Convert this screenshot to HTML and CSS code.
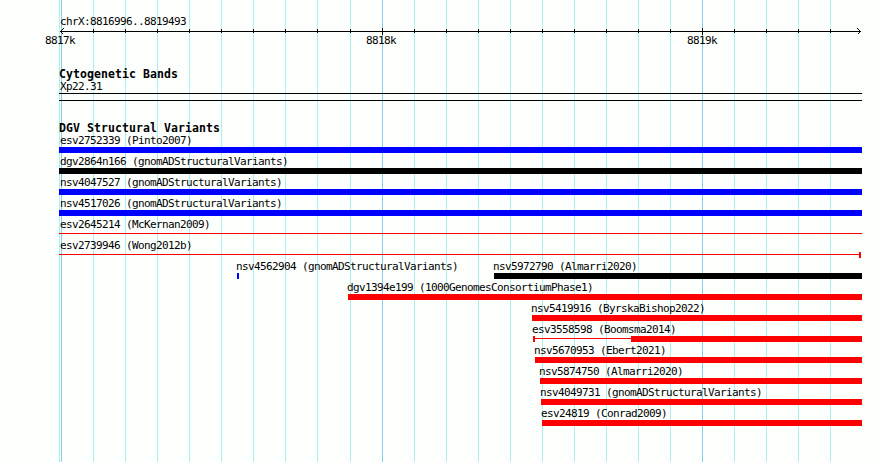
FILE: index.html
```html
<!DOCTYPE html>
<html lang="en">
<head>
    <meta charset="UTF-8">
    <title>chrX:8816996..8819493</title>
    <link rel="stylesheet" href="styles.css">
</head>
<body>
    <div class="browser">
        <svg class="grid" width="890" height="462" shape-rendering="crispEdges">
            <path class="minor" d="M59.5 0V462M93.5 0V462M125.5 0V462M157.5 0V462M189.5 0V462M221.5 0V462M253.5 0V462M285.5 0V462M317.5 0V462M350.5 0V462M414.5 0V462M446.5 0V462M478.5 0V462M510.5 0V462M542.5 0V462M574.5 0V462M606.5 0V462M638.5 0V462M670.5 0V462M734.5 0V462M766.5 0V462M798.5 0V462M830.5 0V462"/>
            <path class="major" d="M61.5 0V462M382.5 0V462M702.5 0V462"/>
        </svg>

        <main class="tracks">
            <header class="ruler">
                <div class="label">chrX:8816996..8819493</div>
                <svg class="scale" width="803" height="8" shape-rendering="crispEdges">
                    <path d="M1 3.5H802M34.5 1V5M66.5 1V5M98.5 1V5M130.5 1V5M162.5 1V5M194.5 1V5M226.5 1V5M258.5 1V5M291.5 1V5M355.5 1V5M387.5 1V5M419.5 1V5M451.5 1V5M483.5 1V5M515.5 1V5M547.5 1V5M579.5 1V5M611.5 1V5M675.5 1V5M707.5 1V5M739.5 1V5M771.5 1V5M323.5 0V7M643.5 0V7"/>
                    <path d="M4.5 0.5L1.5 3.5L4.5 6.5M798.5 0.5L801.5 3.5L798.5 6.5"/>
                </svg>
                <div class="ticks">
                    <span>8817k</span>
                    <span>8818k</span>
                    <span>8819k</span>
                </div>
            </header>

            <section class="cytobands">
                <h2>Cytogenetic Bands</h2>
                <div class="label">Xp22.31</div>
                <div class="band"></div>
            </section>

            <section class="variants">
                <h2>DGV Structural Variants</h2>
                <div class="row"><div class="feature wide blue"><span class="label">esv2752339 (Pinto2007)</span><i class="bar"></i></div></div>
                <div class="row"><div class="feature wide black"><span class="label">dgv2864n166 (gnomADStructuralVariants)</span><i class="bar"></i></div></div>
                <div class="row"><div class="feature wide blue"><span class="label">nsv4047527 (gnomADStructuralVariants)</span><i class="bar"></i></div></div>
                <div class="row"><div class="feature wide blue"><span class="label">nsv4517026 (gnomADStructuralVariants)</span><i class="bar"></i></div></div>
                <div class="row"><div class="feature wide red"><span class="label">esv2645214 (McKernan2009)</span><i class="bar thin"></i></div></div>
                <div class="row"><div class="feature wide red"><span class="label">esv2739946 (Wong2012b)</span><div class="parts"><i class="bar thin"></i><i class="bar cap last"></i></div></div></div>
                <div class="row">
                    <div class="feature blue short" style="margin-left: 178px; width: 257px"><span class="label">nsv4562904 (gnomADStructuralVariants)</span><i class="bar cap"></i></div>
                    <div class="feature black"><span class="label">nsv5972790 (Almarri2020)</span><i class="bar"></i></div>
                </div>
                <div class="row"><div class="feature red" style="margin-left: 289px"><span class="label">dgv1394e199 (1000GenomesConsortiumPhase1)</span><i class="bar"></i></div></div>
                <div class="row"><div class="feature red" style="margin-left: 473px"><span class="label">nsv5419916 (ByrskaBishop2022)</span><i class="bar"></i></div></div>
                <div class="row"><div class="feature red" style="margin-left: 474px"><span class="label">esv3558598 (Boomsma2014)</span><div class="parts"><i class="bar cap"></i><i class="bar thin"></i><i class="bar" style="width: 231px"></i></div></div></div>
                <div class="row"><div class="feature red" style="margin-left: 476px"><span class="label">nsv5670953 (Ebert2021)</span><i class="bar"></i></div></div>
                <div class="row"><div class="feature red" style="margin-left: 481px"><span class="label">nsv5874750 (Almarri2020)</span><i class="bar"></i></div></div>
                <div class="row"><div class="feature red" style="margin-left: 482px"><span class="label">nsv4049731 (gnomADStructuralVariants)</span><i class="bar"></i></div></div>
                <div class="row"><div class="feature red" style="margin-left: 483px"><span class="label">esv24819 (Conrad2009)</span><i class="bar"></i></div></div>
            </section>
        </main>
    </div>
</body>
</html>
```

FILE: styles.css
```css
body {
    margin: 0;
    background-color: #fdfffc;
    color: #000;
    font: 11px/13px "DejaVu Sans Mono", monospace;
    letter-spacing: -0.622px;
}
.browser {
    position: relative;
    width: 890px;
    height: 462px;
    overflow: hidden;
}
/* vertical guide lines behind all the tracks */
.grid {
    position: absolute;
    top: 0;
    left: 0;
}
.grid path {
    fill: none;
}
.minor {
    stroke: #afeeee;
}
.major {
    stroke: #87ceeb;
}
.tracks {
    position: relative;
    width: 803px;
    padding: 15px 0 0 59px;
}
.label {
    display: block;
    padding-left: 1px;
    white-space: nowrap;
}
h2 {
    margin: 0;
    font-size: 11.5px;
    line-height: 12px;
    height: 12px;
    letter-spacing: 0.077px;
}
.ruler {
    height: 53px;
}
.ruler .label {
    height: 13px;
}
.scale {
    display: block;
}
.scale path {
    fill: none;
    stroke: #000;
}
.ticks {
    display: flex;
    width: 672px;
    margin: -2px 0 0 -14px;
    justify-content: space-between;
}
.cytobands {
    height: 54px;
}
.cytobands .label {
    height: 13px;
}
.band {
    height: 6px;
    border-top: 1px solid #000;
    border-bottom: 1px solid #000;
}
.variants h2 {
    height: 12px;
}
.row {
    display: flex;
    height: 21px;
}
.feature {
    flex: 1;
}
.feature.short {
    flex: none;
}
.bar {
    display: block;
    height: 6px;
    background-color: currentColor;
}
.feature .label {
    height: 13px;
    margin-left: -2px;
    color: #000;
}
.wide .label {
    margin-left: 0;
}
.thin {
    height: 1px;
    margin-top: 2px;
}
.cap {
    width: 2px;
}
.parts {
    display: flex;
}
.parts .thin {
    flex: 1;
}
.last {
    margin-right: 1px;
}
.blue {
    color: #00f;
}
.red {
    color: #f00;
}
.black {
    color: #000;
}
```
